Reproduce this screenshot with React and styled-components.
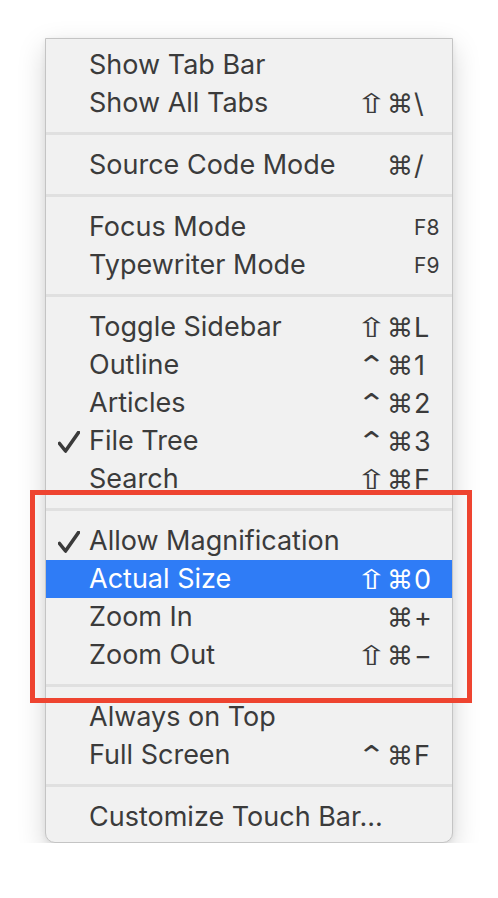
import React from "react";
import styled, { createGlobalStyle } from "styled-components";

const GlobalStyle = createGlobalStyle`
  html, body {
    margin: 0;
    background: #ffffff;
  }
  body {
    font-family: Inter, "Noto Sans", "DejaVu Sans", sans-serif;
  }
`;

const Menu = styled.div`
  box-sizing: border-box;
  width: 408px;
  margin: 38px 0 0 45px;
  padding: 7px 0 6px;
  background: #f1f1f1;
  border: 1px solid #c4c4c4;
  border-radius: 0 0 10px 10px;
  box-shadow: 0 10px 28px rgba(0, 0, 0, 0.17), 0 2px 6px rgba(0, 0, 0, 0.07);
`;

const Row = styled.div`
  display: grid;
  grid-template-columns: 43px 1fr auto 26px;
  align-items: center;
  height: 38px;
  padding-right: 12px;
  color: ${(p) => (p.active ? "#ffffff" : "#3b3b3b")};
  background: ${(p) => (p.active ? "#2f7cf6" : "transparent")};
  font-size: 27px;
`;

const Check = styled.span`
  display: flex;
  padding-left: 12px;
  svg {
    display: block;
  }
`;

const Label = styled.span`
  white-space: nowrap;
  line-height: 38px;
  padding-bottom: 2px;
`;

const Mods = styled.span`
  display: flex;
  justify-content: flex-end;
  align-items: center;
  gap: 4px;
  margin-right: 4px;
  height: 38px;
`;

const Mod = styled.span`
  display: inline-block;
  width: 23px;
  text-align: center;
  font-family: "DejaVu Sans", sans-serif;
  font-size: ${(p) => (p.kind === "cmd" ? "26px" : "27px")};
  line-height: 38px;
  transform: ${(p) => (p.kind === "shift" ? "scaleX(1.4)" : p.kind === "ctrl" ? "scaleX(1.3)" : "none")};
`;

const Key = styled.span`
  font-size: ${(p) => (p.small ? "21px" : "27px")};
  line-height: 38px;
  white-space: nowrap;
`;

const Separator = styled.div`
  padding: 10px 0 11px;
  &::after {
    content: "";
    display: block;
    height: 3px;
    background: #e0e0e0;
  }
`;

const Annotated = styled.div`
  position: relative;
  &::before {
    content: "";
    position: absolute;
    top: -8px;
    bottom: -5px;
    left: -16px;
    right: -20px;
    border: 5px solid #ee4430;
    pointer-events: none;
  }
`;

const CheckMark = ({ color }) => (
  <svg width="22" height="22" viewBox="0 0 22 22">
    <path
      d="M1.5 12.5 L7.5 20 L20.5 1.5"
      fill="none"
      stroke={color}
      strokeWidth="3.6"
      strokeLinecap="round"
      strokeLinejoin="round"
    />
  </svg>
);

const kindOf = (m) => (m === "⇧" ? "shift" : m === "⌃" ? "ctrl" : "cmd");

const Item = ({ label, mods = "", k = "", small, checked, active }) => (
  <Row active={active}>
    <Check>{checked && <CheckMark color={active ? "#fff" : "#3b3b3b"} />}</Check>
    <Label>{label}</Label>
    <Mods>
      {mods.split("").map((m, i) => (
        <Mod key={i} kind={kindOf(m)}>
          {m}
        </Mod>
      ))}
    </Mods>
    <Key small={small}>{k}</Key>
  </Row>
);

export default function App() {
  return (
    <>
      <GlobalStyle />
      <Menu>
        <Item label="Show Tab Bar" />
        <Item label="Show All Tabs" mods="⇧⌘" k="\" />
        <Separator />
        <Item label="Source Code Mode" mods="⌘" k="/" />
        <Separator />
        <Item label="Focus Mode" k="F8" small />
        <Item label="Typewriter Mode" k="F9" small />
        <Separator />
        <Item label="Toggle Sidebar" mods="⇧⌘" k="L" />
        <Item label="Outline" mods="⌃⌘" k="1" />
        <Item label="Articles" mods="⌃⌘" k="2" />
        <Item label="File Tree" mods="⌃⌘" k="3" checked />
        <Item label="Search" mods="⇧⌘" k="F" />
        <Annotated>
          <Separator />
          <Item label="Allow Magnification" checked />
          <Item label="Actual Size" mods="⇧⌘" k="0" active />
          <Item label="Zoom In" mods="⌘" k="+" />
          <Item label="Zoom Out" mods="⇧⌘" k="−" />
          <Separator />
        </Annotated>
        <Item label="Always on Top" />
        <Item label="Full Screen" mods="⌃⌘" k="F" />
        <Separator />
        <Item label="Customize Touch Bar..." />
      </Menu>
    </>
  );
}
